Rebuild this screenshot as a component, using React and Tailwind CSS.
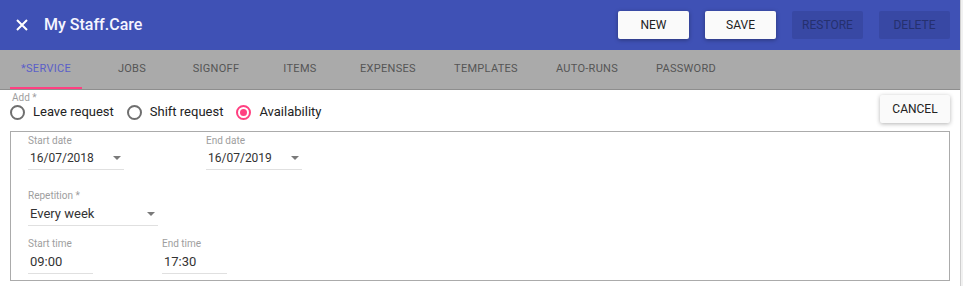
import { useState } from 'react'

const TABS = [
  { label: '*SERVICE', w: 'w-[72px]', active: true },
  { label: 'JOBS', w: 'w-[100px]' },
  { label: 'SIGNOFF', w: 'w-[68px]' },
  { label: 'ITEMS', w: 'w-[100px]' },
  { label: 'EXPENSES', w: 'w-[76px]' },
  { label: 'TEMPLATES', w: 'w-[120px]' },
  { label: 'AUTO-RUNS', w: 'w-[82px]' },
  { label: 'PASSWORD', w: 'w-[116px]' },
]

const KINDS = ['Leave request', 'Shift request', 'Availability']

function Arrow() {
  return (
    <svg width="8" height="4" viewBox="0 0 8 4" className="shrink-0">
      <path d="M0 0 L8 0 L4 4 Z" fill="#7a7a7a" />
    </svg>
  )
}

function Field({ label, value, width, select, big }) {
  return (
    <div className={`flex flex-col ${width}`}>
      <span className="text-[10px] leading-[12px] text-[#9e9e9e]">{label}</span>
      <div
        className={`flex items-center justify-between border-b border-[#e0e0e0] pl-[2px] pr-[3px] text-[#333] ${
          big ? 'h-[24px] text-[13px]' : 'h-[23px] text-[12px]'
        }`}
      >
        <span>{value}</span>
        {select && <Arrow />}
      </div>
    </div>
  )
}

function HeaderButton({ children, disabled }) {
  return (
    <button
      className={`h-[28px] w-[71px] rounded-[2px] text-[12px] ${
        disabled
          ? 'bg-[#3848a4] text-[#25306f]'
          : 'bg-[#fafafa] text-[#222] shadow-[0_1px_4px_rgba(0,0,0,0.35)]'
      }`}
    >
      {children}
    </button>
  )
}

export default function App() {
  const [kind, setKind] = useState('Availability')

  return (
    <div className="flex w-[963px] h-[286px] overflow-hidden bg-white" style={{ fontFamily: 'Roboto, "Liberation Sans", sans-serif' }}>
      <div className="flex flex-col w-[960px]">
        {/* App bar */}
        <div className="flex items-center h-[50px] bg-[#3f51b5] pl-[16px] pr-[10px]">
          <svg width="12" height="12" viewBox="0 0 12 12" className="mr-[16px]">
            <path d="M1 1 L11 11 M11 1 L1 11" stroke="#fff" strokeWidth="2" />
          </svg>
          <span className="text-[16px] font-medium text-[#f5f5ff]">My Staff.Care</span>
          <div className="ml-auto flex gap-[16px]">
            <HeaderButton>NEW</HeaderButton>
            <HeaderButton>SAVE</HeaderButton>
            <HeaderButton disabled>RESTORE</HeaderButton>
            <HeaderButton disabled>DELETE</HeaderButton>
          </div>
        </div>

        {/* Tabs */}
        <div className="flex h-[40px] bg-[#aaaaaa] border-b border-[#8e8e8e] pl-[10px]">
          {TABS.map(t => (
            <div
              key={t.label}
              className={`${t.w} flex items-center justify-center text-[11px] tracking-[0.3px] ${
                t.active ? 'text-[#5a5fc8] border-b-2 border-[#ff4081] pt-[2px]' : 'text-[#555]'
              }`}
            >
              {t.label}
            </div>
          ))}
        </div>

        {/* Add row */}
        <div className="flex items-start justify-between pl-[10px] pr-[10px]">
          <div className="flex flex-col">
            <span className="pl-[2px] pt-[2px] text-[10px] leading-[11px] text-[#9e9e9e]">Add *</span>
            <div className="flex items-center h-[20px] -mt-[1px]">
              {KINDS.map(k => (
                <label key={k} className="flex items-center mr-[13px] cursor-pointer" onClick={() => setKind(k)}>
                  <span
                    className={`flex items-center justify-center w-[15px] h-[15px] rounded-full border-2 ${
                      kind === k ? 'border-[#ff4081]' : 'border-[#6f6f6f]'
                    }`}
                  >
                    {kind === k && <span className="w-[7px] h-[7px] rounded-full bg-[#ff4081]" />}
                  </span>
                  <span className="ml-[8px] text-[13px] text-[#222]">{k}</span>
                </label>
              ))}
            </div>
          </div>
          <button className="mt-[5px] h-[28px] w-[70px] rounded-[2px] bg-[#fafafa] text-[12px] text-[#222] shadow-[0_1px_4px_rgba(0,0,0,0.3)]">
            CANCEL
          </button>
        </div>

        {/* Form box */}
        <div className="mx-[10px] mt-[8px] w-[940px] h-[150px] border border-[#ababab] pl-[17px] pt-[3px]">
          <div className="flex gap-[82px]">
            <Field label="Start date" value="16/07/2018" width="w-[96px]" select />
            <Field label="End date" value="16/07/2019" width="w-[96px]" select />
          </div>
          <div className="flex mt-[20px]">
            <Field label="Repetition *" value="Every week" width="w-[130px]" select big />
          </div>
          <div className="flex gap-[69px] mt-[12px]">
            <Field label="Start time" value="09:00" width="w-[65px]" big />
            <Field label="End time" value="17:30" width="w-[65px]" big />
          </div>
        </div>
      </div>
      <div className="w-[3px] bg-[#f1f1f1] border-l border-[#cfcfcf]" />
    </div>
  )
}
